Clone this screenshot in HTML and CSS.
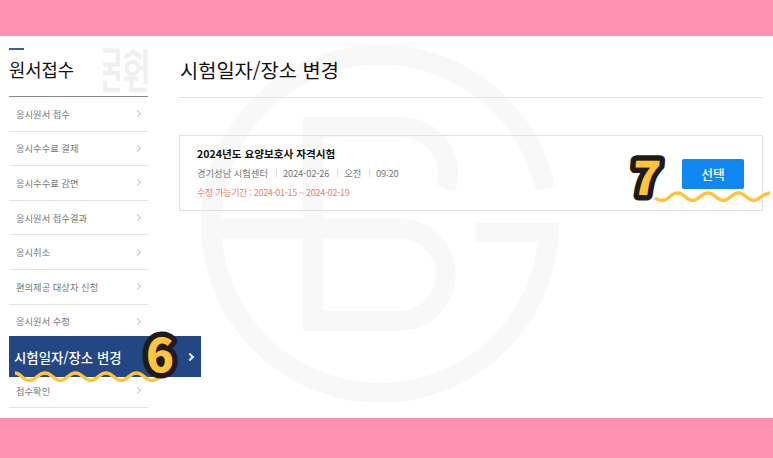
FILE: index.html
```html
<!DOCTYPE html>
<html lang="ko">
<head>
  <meta charset="UTF-8">
  <meta name="viewport" content="width=device-width, initial-scale=1.0">
  <title>시험일자/장소 변경</title>
  <link rel="stylesheet" href="styles.css">
</head>
<body>
  <div class="page">
    <aside class="sidebar">
      <div class="sidebar-head">
        <h2>원서접수</h2>
        <svg class="mark" width="46" height="46" viewBox="0 0 46 46">
          <path d="M1 2.500H15.800V18M1 16.500H18M8.500 17V25M1 25H15.800V33M3 33V42H18M22.500 10L31 3.500L39.500 10M22 30.500H36M29.500 30V42H45M43.500 1V36M38 20H43"/>
          <circle cx="30.500" cy="20" r="6"/>
        </svg>
      </div>
      <ul class="menu">
        <li><span>응시원서 접수</span><i class="arrow"></i></li>
        <li><span>응시수수료 결제</span><i class="arrow"></i></li>
        <li><span>응시수수료 감면</span><i class="arrow"></i></li>
        <li><span>응시원서 접수결과</span><i class="arrow"></i></li>
        <li><span>응시취소</span><i class="arrow"></i></li>
        <li><span>편의제공 대상자 신청</span><i class="arrow"></i></li>
        <li><span>응시원서 수정</span><i class="arrow"></i></li>
        <li class="active">
          <span>시험일자/장소 변경</span><i class="arrow"></i>
          <svg class="wave wave-menu" width="162" height="14" viewBox="0 0 162 14">
            <path d="M1 3C7 3 9 10.500 15.500 10.500S24 3 31 3S39.500 10.500 46 10.500S54.500 3 61.500 3S70 10.500 76.500 10.500S85 3 92 3S100.500 10.500 107 10.500S115.500 3 122.500 3S131 10.500 137.500 10.500S146 6 150 5"/>
          </svg>
          <svg class="step step-six" width="50" height="80" viewBox="0 0 50 80">
            <text x="25" y="54" text-anchor="middle">6</text>
          </svg>
        </li>
        <li><span>접수확인</span><i class="arrow"></i></li>
      </ul>
    </aside>

    <main class="content">
      <svg class="watermark" width="360" height="360" viewBox="0 0 360 360">
        <path d="M345.300 144.500A169 169 0 1 0 348.800 188.500H275.500"/>
        <path d="M11 184.500H201.500A46.300 46.300 0 0 1 201.500 277H113V83H201.500A46.500 46.500 0 0 1 245.300 145"/>
      </svg>
      <h1>시험일자/장소 변경</h1>
      <section class="card">
        <div class="info">
          <h3>2024년도 요양보호사 자격시험</h3>
          <p class="meta"><span>경기성남 시험센터</span><span>2024-02-26</span><span>오전</span><span>09:20</span></p>
          <p class="period">수정 가능기간 : 2024-01-15 ~ 2024-02-19</p>
        </div>
        <button>선택</button>
        <svg class="wave wave-card" width="118" height="14" viewBox="0 0 118 14">
          <path d="M1 8C3 9.500 5 10.500 8 10.500C15 10.500 16.500 3 23.500 3S32 10.500 38.500 10.500S47 3 54 3S62.500 10.500 69 10.500S77.500 3 84.500 3S93 10.500 99.500 10.500S108 3 116 3"/>
        </svg>
        <svg class="step step-seven" width="50" height="80" viewBox="0 0 50 80">
          <text x="25" y="54" text-anchor="middle">7</text>
        </svg>
      </section>
    </main>
  </div>
</body>
</html>
```

FILE: styles.css
```css
* {
  margin: 0;
  padding: 0;
  box-sizing: border-box;
}

body {
  height: 458px;
  padding: 36px 0 40px;
  overflow: hidden;
  background: #ff91b2;
  font-family: "Noto Sans CJK KR", "Noto Sans", sans-serif;
}

.page {
  display: flex;
  gap: 31px;
  height: 382px;
  padding-left: 9px;
  background: #fff;
}

.sidebar {
  width: 139px;
  flex-shrink: 0;
}

.sidebar-head {
  display: flex;
  justify-content: space-between;
  height: 61px;
  padding-top: 12px;
  border-bottom: 1px solid #8c8c8c;
}

.sidebar-head h2 {
  font-size: 17.7px;
  font-weight: 400;
  line-height: 39px;
  color: #111;
  white-space: nowrap;
}

.sidebar-head h2::before {
  content: '';
  display: block;
  width: 15px;
  height: 2px;
  background: #3d5c98;
}

.mark {
  fill: none;
  stroke: #f0f0f0;
  stroke-width: 4.3;
}

.menu {
  list-style: none;
}

.menu li {
  display: flex;
  align-items: center;
  justify-content: space-between;
  height: 34.6px;
  padding: 0 7px;
  border-bottom: 1px solid #e4e4e4;
  font-size: 9.3px;
  color: #777;
  white-space: nowrap;
}

.arrow {
  width: 5px;
  height: 5px;
  margin-right: 1px;
  border: solid #c4c4c4;
  border-width: 1px 1px 0 0;
  transform: rotate(45deg);
}

.menu .active {
  position: relative;
  z-index: 1;
  width: 192px;
  height: 41px;
  margin: -3px 0 -3.4px;
  padding: 0 7px 0 5px;
  border: none;
  background: #234684;
  font-size: 13.4px;
  font-weight: 500;
  color: #fff;
}

.active .arrow {
  width: 6px;
  height: 6px;
  border-color: #e3e9f5;
  border-width: 2px 2px 0 0;
}

.content {
  position: relative;
  width: 584px;
}

.content h1 {
  position: relative;
  height: 62px;
  padding-left: 1px;
  border-bottom: 1px solid #e4e4e4;
  font-size: 19.8px;
  font-weight: 400;
  line-height: 67px;
  color: #111;
}

.card {
  position: relative;
  display: flex;
  align-items: center;
  justify-content: space-between;
  height: 76px;
  margin-top: 37px;
  padding: 2px 18px 0 17px;
  border: 1px solid #e2e2e2;
}

.info h3 {
  font-size: 10.6px;
  font-weight: 700;
  line-height: 18px;
  color: #111;
}

.meta {
  display: flex;
  font-size: 9.3px;
  line-height: 20px;
  color: #777;
}

.meta span + span {
  display: flex;
  align-items: center;
  letter-spacing: -0.15px;
}

.meta span + span::before {
  content: '';
  height: 8px;
  margin: 0 6px 0 8px;
  border-left: 1px solid #ddd;
}

.period {
  font-size: 9px;
  line-height: 20px;
  letter-spacing: -0.3px;
  color: #ee7e72;
}

button {
  width: 62px;
  height: 30px;
  padding-bottom: 2px;
  border: none;
  border-radius: 2px;
  background: #1087f0;
  font-family: inherit;
  font-size: 12.8px;
  font-weight: 500;
  color: #fff;
}

/* logo behind the content */
.watermark {
  position: absolute;
  top: 8px;
  left: 21px;
  fill: none;
  stroke: #f8f8f8;
  stroke-width: 20;
}

/* step markers over the page */
.wave,
.step {
  position: absolute;
}

.wave {
  fill: none;
  stroke: #ffc43b;
  stroke-width: 3.4;
}

.wave-menu {
  left: 5px;
  top: 34px;
}

.wave-card {
  left: 474px;
  top: 54px;
}

.step text {
  font-family: "Noto Sans CJK KR", sans-serif;
  font-size: 46px;
  font-weight: 900;
  fill: #ffc43b;
  stroke: #1f1b1c;
  stroke-width: 11;
  stroke-linejoin: round;
  paint-order: stroke;
}

.step-six {
  left: 126px;
  top: -18px;
}

.step-seven {
  left: 441px;
  top: 5px;
}

.step-seven text {
  transform: skewX(-5deg);
  transform-origin: 25px 40px;
}
```
